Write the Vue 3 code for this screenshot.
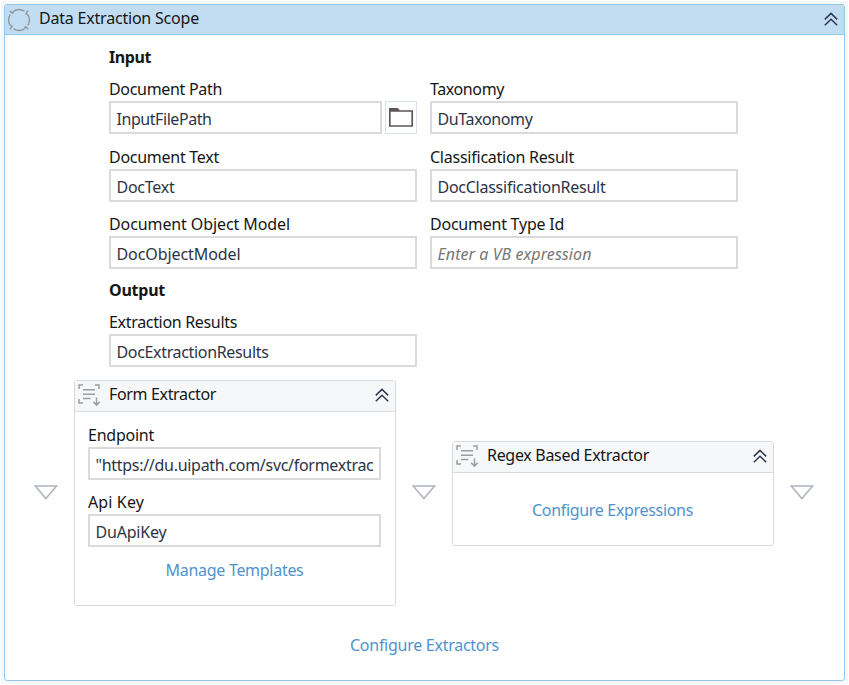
<script setup>
import { h } from 'vue'

const inputs = [
  { label: 'Document Path', lw: 113, value: 'InputFilePath', vw: 95, browse: true },
  { label: 'Taxonomy', lw: 74, value: 'DuTaxonomy', vw: 95 },
  { label: 'Document Text', lw: 110, value: 'DocText', vw: 58 },
  { label: 'Classification Result', lw: 144, value: 'DocClassificationResult', vw: 168 },
  { label: 'Document Object Model', lw: 181, value: 'DocObjectModel', vw: 124 },
  { label: 'Document Type Id', lw: 134, value: '', vw: 154, placeholder: 'Enter a VB expression' },
]

// Spreads a text over a fixed advance width by adjusting its tracking.
const vFit = {
  mounted(el, { value }) {
    const apply = () => {
      el.style.letterSpacing = '0px'
      const natural = el.getBoundingClientRect().width
      el.style.letterSpacing = (value - natural) / el.textContent.length + 'px'
    }
    apply()
    document.fonts?.ready.then(apply)
  },
}

const Chevrons = () =>
  h('svg', { width: 14, height: 15, viewBox: '0 0 14 15', fill: 'none', stroke: '#2f3850', 'stroke-width': 1.5 }, [
    h('path', { d: 'M.8 7.4 7 1.4l6.2 6M.8 13.2 7 7.2l6.2 6' }),
  ])

const ScanIcon = () =>
  h('svg', { width: 23, height: 23, viewBox: '0 0 23 23', fill: 'none', stroke: '#9a9da1', 'stroke-width': 1.5 }, [
    h('path', { d: 'M1 5V1h4M17 1h4v4M1 15v4h4M5 5.8h12M5 10.2h12M5 14.5h7.5M18.5 13.5v7.5M15.2 17.8l3.3 3.3 3.3-3.3' }),
  ])

const Triangle = () =>
  h('svg', { width: 24, height: 15, viewBox: '0 0 24 15', fill: '#fff', stroke: '#acb4c0', 'stroke-width': 1.5 }, [
    h('path', { d: 'M1.2 1h21.4L11.9 13.5z' }),
  ])
</script>

<template>
  <div class="canvas">
    <section class="scope">
      <header class="scope-head">
        <svg class="ring" width="24" height="24" viewBox="0 0 24 24" fill="none" stroke="#8f979e" stroke-width="1.4">
          <path d="M6.6 3.2A10.3 10.3 0 0 1 17.4 3.2M20.8 6.6A10.3 10.3 0 0 1 20.8 17.4M17.4 20.8A10.3 10.3 0 0 1 6.6 20.8M3.2 17.4A10.3 10.3 0 0 1 3.2 6.6" />
          <path d="M2.6 2.8 5.6 5.4M6.6 3.2 5.6 5.6M21.2 2.6 18.6 5.6M20.8 6.6 18.4 5.6M21.4 21.2 18.4 18.6M17.4 20.8 18.4 18.4M2.8 21.4 5.4 18.4M3.2 17.4 5.6 18.4" />
        </svg>
        <span class="title"><span v-fit="160">Data Extraction Scope</span></span>
        <Chevrons />
      </header>

      <div class="form">
        <h3><span v-fit="42">Input</span></h3>
        <div class="grid">
          <div v-for="f in inputs" :key="f.label" class="field">
            <label><span v-fit="f.lw">{{ f.label }}</span></label>
            <div class="line">
              <div class="box">
                <span v-if="f.value" v-fit="f.vw">{{ f.value }}</span>
                <span v-else v-fit="f.vw" class="hint">{{ f.placeholder }}</span>
              </div>
              <button v-if="f.browse" class="browse">
                <svg width="26" height="21" viewBox="0 0 26 21">
                  <path d="M1 1h9l2 3H1z" fill="#5f565a" />
                  <path d="M1.8 4h22.4v15H1.8z" fill="#fff" stroke="#5f565a" stroke-width="1.7" />
                </svg>
              </button>
            </div>
          </div>
        </div>
        <h3 class="out"><span v-fit="56">Output</span></h3>
        <div class="field result">
          <label><span v-fit="128">Extraction Results</span></label>
          <div class="line"><div class="box"><span v-fit="152">DocExtractionResults</span></div></div>
        </div>
      </div>

      <div class="flow">
        <Triangle />
        <article class="card tall">
          <header>
            <ScanIcon />
            <span class="title"><span v-fit="107">Form Extractor</span></span>
            <Chevrons />
          </header>
          <div class="body">
            <div class="field">
              <label><span v-fit="66">Endpoint</span></label>
              <div class="line"><div class="box"><span v-fit="278">"https://du.uipath.com/svc/formextrac</span></div></div>
            </div>
            <div class="field">
              <label><span v-fit="56">Api Key</span></label>
              <div class="line"><div class="box"><span v-fit="71">DuApiKey</span></div></div>
            </div>
            <a><span v-fit="138">Manage Templates</span></a>
          </div>
        </article>
        <Triangle />
        <article class="card short">
          <header>
            <ScanIcon />
            <span class="title"><span v-fit="162">Regex Based Extractor</span></span>
            <Chevrons />
          </header>
          <div class="body">
            <a><span v-fit="161">Configure Expressions</span></a>
          </div>
        </article>
        <Triangle />
      </div>

      <a class="foot"><span v-fit="149">Configure Extractors</span></a>
    </section>
  </div>
</template>

<style>
body {
  background: #fff;
}
</style>

<style scoped>
* {
  box-sizing: border-box;
}
.canvas {
  width: 849px;
  height: 685px;
  padding: 3px 4px 4px 3px;
  border: 1px solid #fff;
  background: #f5f7f8;
  font: 16px/22px 'Noto Sans', 'Open Sans', sans-serif;
  color: #161616;
  white-space: nowrap;
}
.scope {
  width: 841px;
  height: 677px;
  background: #fff;
  border: 1px solid #96c8e8;
  border-radius: 3px;
  overflow: hidden;
}
.scope-head {
  display: flex;
  align-items: center;
  height: 30px;
  padding: 0 6px 0 2px;
  background: #c2ddf1;
  border-bottom: 1px solid #96c8e8;
}
.scope-head .ring {
  margin-right: 8px;
}
.title {
  flex: 1;
  position: relative;
  top: -2px;
}
.form {
  padding: 11px 0 0 104px;
}
h3 {
  margin: 0;
  font-size: 16px;
  line-height: 22px;
  font-weight: 700;
}
.grid {
  display: grid;
  grid-template-columns: 308px 308px;
  column-gap: 13px;
  row-gap: 11.5px;
  margin-top: 10px;
}
.field label {
  display: block;
  height: 22px;
}
.line {
  display: flex;
  gap: 3px;
  margin-top: 1px;
}
.box {
  flex: 1;
  min-width: 0;
  height: 33px;
  padding: 5px 5px 0 5.5px;
  border: 2px solid #d9dadd;
  background: #fff;
  color: #2c3445;
}
.hint {
  font-style: italic;
  color: #777;
}
.browse {
  display: flex;
  align-items: center;
  justify-content: center;
  width: 32px;
  height: 33px;
  padding: 0;
  border: 1px solid #dbe1e8;
  background: #fff;
}
.out {
  margin-top: 10px;
}
.result {
  width: 308px;
  margin-top: 10px;
}
.flow {
  display: flex;
  align-items: center;
  gap: 16px;
  margin: 12.5px 0 0 29px;
}
.card {
  width: 322px;
  border: 1px solid #d8dadd;
  border-radius: 3px;
  background: #fff;
}
.card header {
  display: flex;
  align-items: center;
  height: 31px;
  padding: 0 6px 0 3px;
  background: #f5f7f8;
  border-bottom: 1px solid #d8dadd;
}
.card header .title {
  margin-left: 8px;
}
.tall {
  height: 226px;
}
.short {
  height: 105px;
  margin-top: 1px;
}
.body {
  padding: 12px 14px 12px 13px;
}
.body .field + .field {
  margin-top: 11px;
}
a {
  display: block;
  text-align: center;
  color: #4f93cc;
}
.tall a {
  margin-top: 12px;
}
.short a {
  margin-top: 14px;
}
.foot {
  margin-top: 28px;
}
</style>
